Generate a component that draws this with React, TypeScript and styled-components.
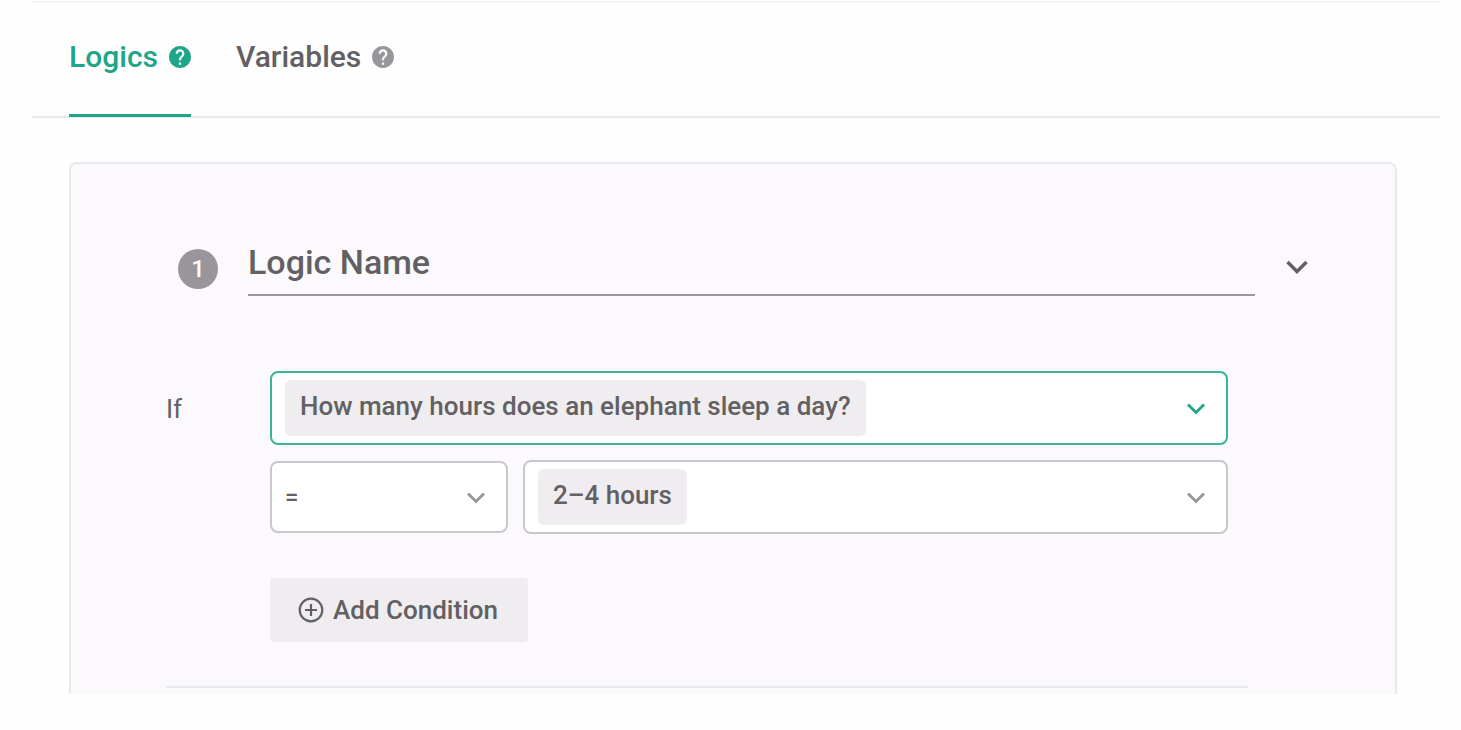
import React from "react";
import styled, { createGlobalStyle } from "styled-components";

const color = {
  accent: "#1fa588",
  text: "#626063",
  muted: "#98969a",
  line: "#e9e8eb",
  field: "#c9c7cb",
  chip: "#efedf0",
  panel: "#fbf9fc",
};

const GlobalStyle = createGlobalStyle`
  *, *::before, *::after { box-sizing: border-box; }
  body {
    margin: 0;
    background: #fefefe;
    color: ${color.text};
    font-family: Roboto, "Liberation Sans", sans-serif;
  }
  button, input, select { font: inherit; color: inherit; }
`;

const Page = styled.main`
  padding: 1px 21px 0 32px;
`;

const Tabs = styled.nav`
  display: flex;
  gap: 45px;
  height: 117px;
  padding-left: 37px;
  border-top: 2px solid #f5f3f7;
  border-bottom: 2px solid ${color.line};
`;

const Tab = styled.a<{ $active?: boolean }>`
  display: flex;
  align-items: flex-start;
  gap: 11px;
  height: 114px;
  padding-top: 36px;
  border-bottom: 3px solid ${(p) => (p.$active ? color.accent : "transparent")};
  color: ${(p) => (p.$active ? color.accent : color.text)};
  font-size: 30px;
  font-weight: 500;
  line-height: 36px;
  text-decoration: none;
`;

const HelpMark = styled.svg<{ $active?: boolean }>`
  width: 22px;
  height: 22px;
  margin-top: 7px;
  fill: ${(p) => (p.$active ? color.accent : color.muted)};
`;

const Card = styled.section`
  margin: 44px 43px 0 37px;
  padding: 64px 74px 6px 95px;
  border: 2px solid #ebe8ed;
  border-bottom: 0;
  border-radius: 8px 8px 0 0;
  background: ${color.panel};
`;

const CardHeader = styled.header`
  display: flex;
  align-items: flex-end;
  padding-left: 12px;
`;

const Badge = styled.span`
  display: grid;
  place-items: center;
  width: 40px;
  height: 40px;
  margin: 0 30px 7px 0;
  border-radius: 50%;
  background: ${color.muted};
  color: #fff;
  font-size: 24px;
  font-weight: 500;
`;

const NameInput = styled.input`
  flex: 1;
  min-width: 0;
  height: 68px;
  padding: 2px 0 0;
  border: 0;
  border-bottom: 2px solid #99969c;
  outline: 0;
  background: transparent;
  font-size: 34px;
  font-weight: 500;
`;

const IconButton = styled.button`
  display: grid;
  place-items: center;
  width: 48px;
  height: 48px;
  margin: 0 0 5px 18px;
  padding: 0;
  border: 0;
  background: transparent;
`;

const Condition = styled.div`
  display: flex;
  margin-right: 73px;
  padding: 75px 20px 44px 0;
  border-bottom: 2px solid ${color.line};
`;

const IfLabel = styled.span`
  width: 104px;
  font-size: 26px;
  line-height: 76px;
`;

const Fields = styled.div`
  display: flex;
  flex: 1;
  flex-direction: column;
  gap: 15px;
  min-width: 0;
`;

const FieldRow = styled.div`
  display: flex;
  align-items: center;
  gap: 15px;
`;

const Field = styled.label<{ $active?: boolean; $compact?: boolean }>`
  display: flex;
  flex: ${(p) => (p.$compact ? "0 0 238px" : "1")};
  align-items: center;
  justify-content: space-between;
  height: ${(p) => (p.$compact ? "72px" : "74px")};
  padding: 0 20px 0 13px;
  border: 2px solid ${(p) => (p.$active ? "#3cb398" : color.field)};
  border-radius: 8px;
  background: #fff;
  color: ${(p) => (p.$active ? color.accent : color.muted)};
`;

const Select = styled.select<{ $chip?: boolean }>`
  appearance: none;
  height: 56px;
  padding: ${(p) => (p.$chip ? "0 15px 4px" : "0")};
  border: 0;
  border-radius: 6px;
  outline: 0;
  background: ${(p) => (p.$chip ? color.chip : "transparent")};
  color: ${color.text};
  font-size: ${(p) => (p.$chip ? "26px" : "24px")};
  font-weight: 500;
`;

const AddButton = styled.button`
  display: flex;
  align-items: center;
  align-self: flex-start;
  gap: 9px;
  height: 64px;
  margin-top: 29px;
  padding: 0 30px 0 28px;
  border: 0;
  border-radius: 4px;
  background: ${color.chip};
  font-size: 26px;
  font-weight: 500;
`;

function HelpIcon({ active }: { active?: boolean }) {
  return (
    <HelpMark $active={active} viewBox="2 2 20 20" aria-hidden="true">
      <path d="M12 2C6.480 2 2 6.480 2 12s4.480 10 10 10 10-4.480 10-10S17.520 2 12 2zm1 17h-2v-2h2v2zm2.070-7.750l-.9.920C13.450 12.900 13 13.500 13 15h-2v-.5c0-1.100.45-2.100 1.170-2.830l1.240-1.260c.37-.36.59-.86.59-1.410 0-1.100-.9-2-2-2s-2 .9-2 2H8c0-2.210 1.790-4 4-4s4 1.790 4 4c0 .88-.36 1.680-.93 2.250z" />
    </HelpMark>
  );
}

function Chevron({ large }: { large?: boolean }) {
  return (
    <svg
      width={large ? 24 : 20}
      height={large ? 16 : 14}
      viewBox={large ? "0 0 24 16" : "0 0 20 14"}
      fill="none"
      stroke="currentColor"
      strokeWidth={large ? 3.5 : 2.8}
      aria-hidden="true"
    >
      <path d={large ? "M2.500 3L12 12.500 21.500 3" : "M2 3.500L10 11.500 18 3.500"} />
    </svg>
  );
}

function AddIcon() {
  return (
    <svg width="26" height="26" viewBox="0 0 26 26" fill="none" stroke="currentColor" aria-hidden="true">
      <circle cx="13" cy="13" r="11.300" strokeWidth="2.200" />
      <path d="M13 7v12M7 13h12" strokeWidth="2.200" />
    </svg>
  );
}

export default function App() {
  return (
    <>
      <GlobalStyle />
      <Page>
        <Tabs aria-label="Sections">
          <Tab href="#logics" $active aria-current="page">
            Logics
            <HelpIcon active />
          </Tab>
          <Tab href="#variables">
            Variables
            <HelpIcon />
          </Tab>
        </Tabs>
        <Card>
          <CardHeader>
            <Badge>1</Badge>
            <NameInput aria-label="Logic Name" defaultValue="Logic Name" />
            <IconButton type="button" aria-label="Collapse logic">
              <Chevron large />
            </IconButton>
          </CardHeader>
          <Condition>
            <IfLabel>If</IfLabel>
            <Fields>
              <FieldRow>
                <Field $active>
                  <Select $chip aria-label="Question">
                    <option>How many hours does an elephant sleep a day?</option>
                  </Select>
                  <Chevron />
                </Field>
              </FieldRow>
              <FieldRow>
                <Field $compact>
                  <Select aria-label="Operator">
                    <option>=</option>
                  </Select>
                  <Chevron />
                </Field>
                <Field>
                  <Select $chip aria-label="Answer">
                    <option>2–4 hours</option>
                  </Select>
                  <Chevron />
                </Field>
              </FieldRow>
              <AddButton type="button">
                <AddIcon />
                Add Condition
              </AddButton>
            </Fields>
          </Condition>
        </Card>
      </Page>
    </>
  );
}
